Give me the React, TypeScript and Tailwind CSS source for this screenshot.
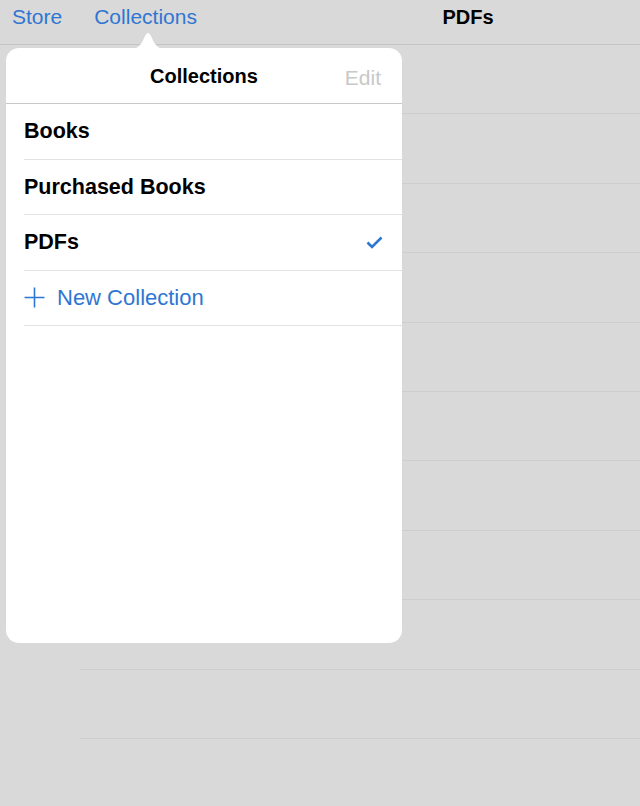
import React from "react";

const font = { fontFamily: '"Liberation Sans", Arial, sans-serif' };

export default function App() {
  const bgRows = Array.from({ length: 11 });
  const items = ["Books", "Purchased Books", "PDFs"];
  return (
    <div
      className="relative w-[640px] h-[806px] overflow-hidden bg-[#d9d9d9]"
      style={font}
    >
      {/* Nav bar */}
      <div className="flex h-[45px] border-b border-[#c4c4c4] text-[21px] leading-[34px]">
        <div className="flex w-[400px] pl-[12px] text-[#2f76d2]">
          <span>Store</span>
          <span className="ml-[32px]">Collections</span>
        </div>
        <div className="w-[136px] text-center text-[20px] font-bold text-black">PDFs</div>
      </div>

      {/* Background list */}
      <div className="flex flex-col">
        {bgRows.map((_, i) => (
          <div key={i} className="h-[69.4px] pl-[80px]">
            <div className="h-full border-b border-[#cdcdcd]" />
          </div>
        ))}
      </div>

      {/* Popover arrow */}
      <svg
        className="absolute left-[131px] top-[31px]"
        width="34"
        height="18"
        viewBox="0 0 34 18"
      >
        <path
          d="M0 18 C 8 18 11 12 14 5 Q 17 -1 20 5 C 23 12 26 18 34 18 Z"
          fill="#ffffff"
        />
      </svg>

      {/* Popover */}
      <div className="absolute left-[6px] top-[48px] w-[396px] h-[595px] rounded-[13px] bg-white">
        <div className="relative flex h-[56px] items-center justify-center border-b border-[#c8c8c8]">
          <span className="text-[20px] font-bold text-black">Collections</span>
          <span className="absolute right-[21px] top-[14px] text-[21px] text-[#c8c8c8]">
            Edit
          </span>
        </div>
        <div className="pl-[18px]">
          {items.map((t) => (
            <div
              key={t}
              className="flex h-[55.5px] items-center justify-between border-b border-[#e2e2e2] pr-[19px]"
            >
              <span className="text-[21.5px] font-bold text-black">{t}</span>
              {t === "PDFs" && (
                <svg width="17" height="13" viewBox="0 0 17 13">
                  <path
                    d="M1.5 6.5 L6 11 L15.5 1.5"
                    fill="none"
                    stroke="#2f76d2"
                    strokeWidth="2.6"
                  />
                </svg>
              )}
            </div>
          ))}
          <div className="flex h-[55.5px] items-center border-b border-[#e2e2e2]">
            <svg width="21" height="21" viewBox="0 0 21 21">
              <path
                d="M10.5 0.5 V20.5 M0.5 10.5 H20.5"
                stroke="#2f76d2"
                strokeWidth="1.6"
                fill="none"
              />
            </svg>
            <span className="ml-[12px] text-[22px] text-[#2f76d2]">New Collection</span>
          </div>
        </div>
      </div>
    </div>
  );
}
